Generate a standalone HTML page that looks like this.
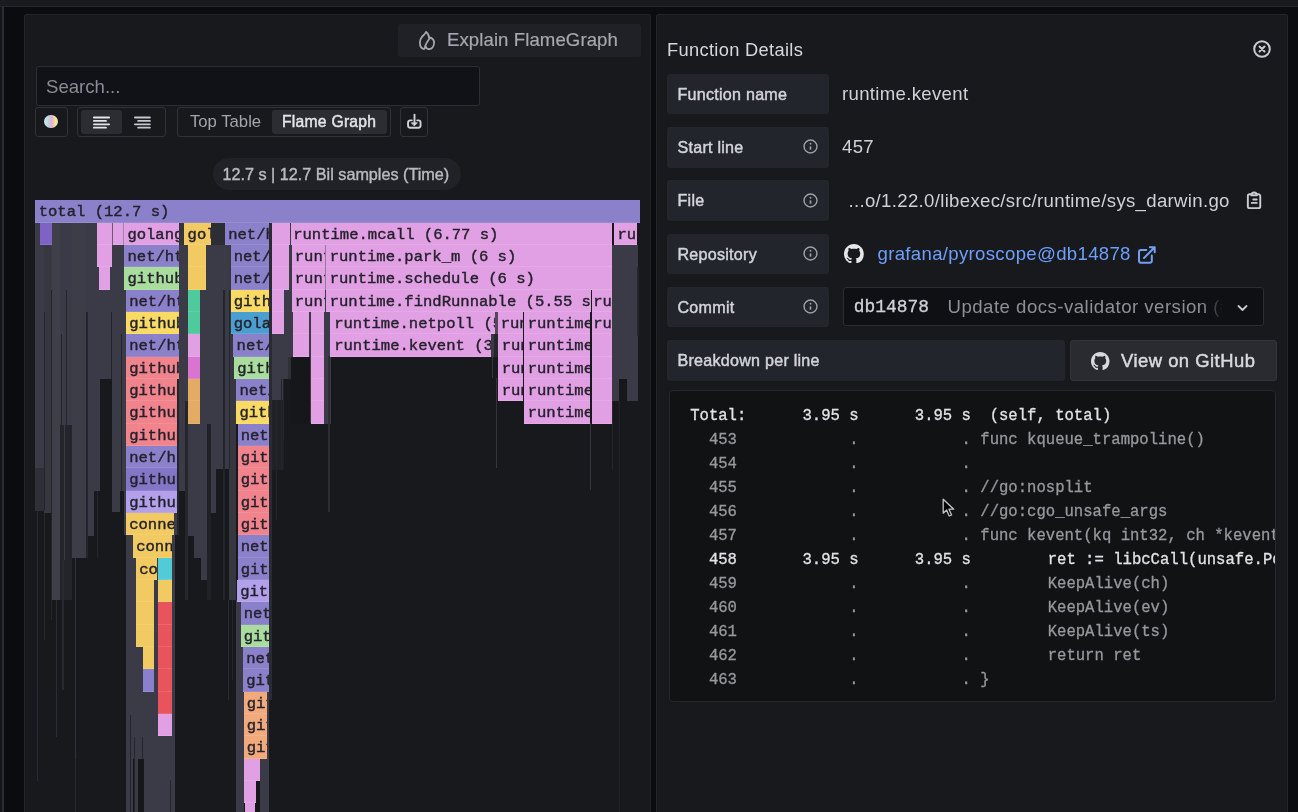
<!DOCTYPE html>
<html><head><meta charset="utf-8"><title>Flame Graph</title>
<style>
*{box-sizing:border-box;margin:0;padding:0}
html,body{width:1298px;height:812px;overflow:hidden;background:#0b0c0f}
body{position:relative;font-family:"Liberation Sans",sans-serif;color:#d0d1d8}
.abs{position:absolute}
.r{position:absolute}
.b{position:absolute;height:22.33px;overflow:hidden;white-space:pre;font-family:"Liberation Mono",monospace;font-size:15.55px;line-height:24px;color:#24222c;-webkit-text-stroke:.4px #24222c;box-shadow:inset 0 -1px 0 rgba(255,255,255,.10)}
.panel{position:absolute;background:#17191d;border:1px solid #222428;border-radius:2px}
.lbl{position:absolute;left:667px;width:162px;height:40.5px;background:#22252b;border-radius:3px;font-size:16.1px;-webkit-text-stroke:.45px #d3d4db;letter-spacing:.25px;line-height:40.5px;padding-left:10.5px;color:#d3d4db;white-space:pre}
.val{position:absolute;font-size:18.6px;line-height:40px;color:#d0d1d8;white-space:pre;letter-spacing:.32px}
.info{position:absolute;left:803px;width:15px;height:15px}
.mono{font-family:"Liberation Mono",monospace}
.code{position:absolute;left:668.5px;top:390px;width:607px;height:312px;background:#111214;border:1px solid #25272c;border-radius:4px;overflow:hidden}
.code pre{position:absolute;left:20.7px;top:12.6px;font-family:"Liberation Mono",monospace;font-size:15.6px;line-height:24px;color:#97989d;white-space:pre;-webkit-text-stroke:.3px #97989d}
.code pre b{font-weight:normal;color:#e2e2e8;-webkit-text-stroke:.3px #e2e2e8}
.code pre i{display:inline-block;width:67.4px}
</style></head><body><div id="root" style="position:absolute;left:0;top:0;width:1298px;height:812px;overflow:hidden;will-change:transform">
<!-- top strip / side strip -->
<div class="abs" style="left:0;top:0;width:1298px;height:6px;background:#1a1b1f"></div>
<div class="abs" style="left:0;top:5.5px;width:1298px;height:1.5px;background:#25272c"></div>
<div class="abs" style="left:0;top:7px;width:3px;height:805px;background:#15161a"></div>
<div class="abs" style="left:2.2px;top:7px;width:1.4px;height:805px;background:#2a2c33"></div>

<!-- left panel -->
<div class="panel" style="left:24px;top:14px;width:627px;height:820px"></div>
<!-- right panel -->
<div class="panel" style="left:656px;top:14px;width:631.8px;height:820px"></div>

<!-- Explain FlameGraph button -->
<div class="abs" style="left:397.5px;top:24px;width:243px;height:32.5px;background:#1f2126;border-radius:3px"></div>
<svg class="abs" style="left:418.7px;top:31.1px" width="16" height="19" viewBox="0 0 16 19" fill="none" stroke="#a6a7ae" stroke-width="1.8" stroke-linecap="round" stroke-linejoin="round"><path d="M7.100 .9C5.800 3.200 4.600 4.200 3.200 5.600C1.400 7.600 .9 9.600 .9 11.600C.9 15 2.600 17.800 5.200 18.100C5.900 18.100 5.900 16.500 6.300 14.800C7 12.800 8.600 10.200 10.300 7.800C10.200 5.500 9.200 2.800 7.100 .9ZM10.300 7.800C10.800 7 11.600 6.500 12.400 6.900C14.200 8 15.100 9.800 15.100 11.600C15.100 15.200 13 17.900 10.200 18.200C8.400 18.200 6.900 16.800 6.300 14.800"/></svg>
<div class="abs" style="left:447px;top:24px;font-size:18.6px;line-height:32.5px;color:#a6a7ae;white-space:pre;letter-spacing:.08px;-webkit-text-stroke:.2px #a6a7ae" id="explain">Explain FlameGraph</div>

<!-- Search -->
<div class="abs" style="left:35.5px;top:66px;width:444px;height:39.5px;background:#111217;border:1px solid #2b2d33;border-radius:3px"></div>
<div class="abs" style="left:46px;top:67px;font-size:18.6px;line-height:40px;color:#8a8b93;white-space:pre" id="search">Search...</div>

<!-- toolbar -->
<div class="abs" style="left:35px;top:107px;width:32.5px;height:29.5px;border:1px solid #303238;border-radius:3px"></div>
<div class="abs" style="left:44.4px;top:114.8px;width:13.4px;height:13.4px;border-radius:50%;background:linear-gradient(90deg,#dfe2e4 0%,#b4dcea 28%,#e8add0 55%,#f2e39c 80%,#e4edba 100%)"></div>

<div class="abs" style="left:77px;top:107px;width:89px;height:29.5px;border:1px solid #303238;border-radius:3px"></div>
<div class="abs" style="left:81px;top:110px;width:40.5px;height:23.5px;background:#2b2d33;border-radius:3px"></div>
<svg class="abs" style="left:92px;top:115.6px" width="19" height="15" viewBox="0 0 19 15" stroke="#e4e5ea" stroke-width="1.8" stroke-linecap="round"><path d="M1.900 1.500H17.100M1.900 4.900H14M1.900 8.300H17.100M1.900 11.700H14"/></svg>
<svg class="abs" style="left:133px;top:115.600px" width="19" height="15" viewBox="0 0 19 15" stroke="#c6c7ce" stroke-width="1.8" stroke-linecap="round"><path d="M1.900 1.500H16.900M5.100 4.900H16.900M1.900 8.300H16.900M5.100 11.700H16.900"/></svg>

<div class="abs" style="left:176.500px;top:107px;width:214px;height:29.5px;border:1px solid #303238;border-radius:3px"></div>
<div class="abs" style="left:190px;top:107px;font-size:16.7px;line-height:29.5px;color:#a3a4ac;white-space:pre" id="toptable">Top Table</div>
<div class="abs" style="left:271.5px;top:110px;width:115.5px;height:23.5px;background:#2b2d33;border-radius:3px"></div>
<div class="abs" style="left:282px;top:107px;font-size:15.7px;-webkit-text-stroke:.45px #e4e5ea;letter-spacing:.25px;line-height:29.5px;color:#e4e5ea;white-space:pre" id="flamegraph">Flame Graph</div>

<div class="abs" style="left:400px;top:107px;width:27.5px;height:29.5px;border:1px solid #303238;border-radius:3px"></div>
<svg class="abs" style="left:405px;top:112px" width="19" height="19" viewBox="0 0 19 19" fill="none" stroke="#d0d1d8" stroke-width="1.9" stroke-linecap="round" stroke-linejoin="round"><path d="M6.800 8.350H5.200C4 8.350 3.050 9.300 3.050 10.500V13.600C3.050 14.800 4 15.750 5.200 15.750H13.400C14.600 15.750 15.550 14.800 15.550 13.600V10.500C15.550 9.300 14.600 8.350 13.400 8.350H12.200M9.500 2.600V11"/><path d="M6.700 10.900H12.300L9.500 13.500Z" fill="#d0d1d8" stroke-width="1"/></svg>

<!-- pill -->
<div class="abs" style="left:213px;top:157.5px;width:248px;height:32.5px;background:#202227;border-radius:17px"></div>
<div class="abs" style="left:222.5px;top:157.500px;font-size:16.2px;line-height:32.5px;color:#b9bac1;white-space:pre;-webkit-text-stroke:.4px #b9bac1;letter-spacing:0px" id="pill">12.7 s | 12.7 Bil samples (Time)</div>

<!-- flame graph -->
<div class="r" style="left:35.00px;top:222.00px;width:9.00px;height:246.00px;background:#3a3b46"></div>
<div class="r" style="left:35.00px;top:468.00px;width:9.00px;height:43.00px;background:#2e2f37"></div>
<div class="r" style="left:44.00px;top:222.00px;width:7.00px;height:291.00px;background:#37383f"></div>
<div class="r" style="left:51.00px;top:222.00px;width:1.30px;height:68.00px;background:#3a3b46"></div>
<div class="r" style="left:52.00px;top:222.00px;width:8.00px;height:378.00px;background:#3e3f49"></div>
<div class="r" style="left:60.00px;top:222.00px;width:12.00px;height:203.00px;background:#3a3b46"></div>
<div class="r" style="left:60.00px;top:425.00px;width:12.00px;height:175.00px;background:#24252b"></div>
<div class="r" style="left:63.50px;top:425.00px;width:1.50px;height:135.00px;background:#383943"></div>
<div class="r" style="left:72.00px;top:222.00px;width:14.00px;height:336.00px;background:#3c3d47"></div>
<div class="r" style="left:85.60px;top:222.00px;width:2.90px;height:90.00px;background:#3a3b46"></div>
<div class="r" style="left:88.00px;top:222.00px;width:6.00px;height:314.00px;background:#3a3b46"></div>
<div class="r" style="left:94.00px;top:222.00px;width:6.00px;height:269.00px;background:#3a3b46"></div>
<div class="r" style="left:100.00px;top:222.00px;width:12.00px;height:157.00px;background:#3a3b46"></div>
<div class="r" style="left:112.00px;top:222.00px;width:8.00px;height:290.40px;background:#3a3b46"></div>
<div class="r" style="left:120.00px;top:222.00px;width:6.00px;height:269.00px;background:#3a3b46"></div>
<div class="r" style="left:51.00px;top:290.00px;width:1.30px;height:330.00px;background:#24252b"></div>
<div class="r" style="left:65.50px;top:290.00px;width:1.60px;height:135.00px;background:#24252b"></div>
<div class="r" style="left:85.60px;top:312.00px;width:2.20px;height:246.00px;background:#24252b"></div>
<div class="r" style="left:110.50px;top:312.00px;width:1.40px;height:67.00px;background:#24252b"></div>
<div class="r" style="left:60.50px;top:334.00px;width:1.60px;height:91.00px;background:#24252b"></div>
<div class="r" style="left:44.00px;top:312.00px;width:1.00px;height:199.00px;background:#24252b"></div>
<div class="r" style="left:121.00px;top:334.00px;width:1.00px;height:157.00px;background:#24252b"></div>
<div class="r" style="left:96.50px;top:491.00px;width:1.00px;height:67.00px;background:#24252b"></div>
<div class="r" style="left:36.50px;top:511.00px;width:1.50px;height:270.00px;background:#2a2b32"></div>
<div class="r" style="left:55.50px;top:600.00px;width:1.50px;height:137.00px;background:#2c2d34"></div>
<div class="r" style="left:62.00px;top:560.00px;width:1.50px;height:130.00px;background:#292a31"></div>
<div class="r" style="left:74.50px;top:558.00px;width:1.80px;height:201.00px;background:#2f3038"></div>
<div class="r" style="left:74.50px;top:759.00px;width:1.50px;height:53.00px;background:#25262c"></div>
<div class="r" style="left:44.00px;top:513.00px;width:1.20px;height:127.00px;background:#26272d"></div>
<div class="r" style="left:124.00px;top:222.00px;width:55.00px;height:313.00px;background:#3a3b46"></div>
<div class="r" style="left:126.00px;top:535.00px;width:49.00px;height:277.00px;background:#3a3b46"></div>
<div class="r" style="left:129.50px;top:715.00px;width:1.20px;height:97.00px;background:#24252b"></div>
<div class="r" style="left:133.50px;top:737.00px;width:1.20px;height:75.00px;background:#24252b"></div>
<div class="r" style="left:142.00px;top:737.00px;width:1.20px;height:23.00px;background:#24252b"></div>
<div class="r" style="left:138.00px;top:759.00px;width:6.00px;height:53.00px;background:#16171b"></div>
<div class="r" style="left:132.50px;top:759.00px;width:1.50px;height:53.00px;background:#16171b"></div>
<div class="r" style="left:170.00px;top:780.00px;width:1.20px;height:32.00px;background:#24252b"></div>
<div class="r" style="left:179.00px;top:222.00px;width:5.00px;height:23.00px;background:#33343d"></div>
<div class="r" style="left:177.00px;top:245.00px;width:2.40px;height:290.00px;background:#24252b"></div>
<div class="r" style="left:179.00px;top:245.00px;width:6.00px;height:246.00px;background:#3a3b46"></div>
<div class="r" style="left:289.00px;top:222.00px;width:2.60px;height:23.00px;background:#9f8ba6"></div>
<div class="r" style="left:185.30px;top:245.00px;width:2.70px;height:156.00px;background:#3a3b46"></div>
<div class="r" style="left:185.30px;top:401.00px;width:2.70px;height:199.00px;background:#25262c"></div>
<div class="r" style="left:188.00px;top:245.00px;width:6.00px;height:291.00px;background:#3a3b46"></div>
<div class="r" style="left:194.00px;top:245.00px;width:7.00px;height:313.00px;background:#3a3b46"></div>
<div class="r" style="left:201.00px;top:245.00px;width:6.00px;height:335.00px;background:#3a3b46"></div>
<div class="r" style="left:207.00px;top:245.00px;width:4.00px;height:179.00px;background:#3a3b46"></div>
<div class="r" style="left:207.00px;top:424.00px;width:4.00px;height:176.00px;background:#202126"></div>
<div class="r" style="left:211.00px;top:245.00px;width:5.00px;height:268.00px;background:#3a3b46"></div>
<div class="r" style="left:216.00px;top:245.00px;width:7.00px;height:224.00px;background:#3a3b46"></div>
<div class="r" style="left:222.80px;top:245.00px;width:2.60px;height:45.00px;background:#3a3b46"></div>
<div class="r" style="left:222.80px;top:290.00px;width:2.60px;height:310.00px;background:#24252b"></div>
<div class="r" style="left:225.00px;top:245.00px;width:4.00px;height:224.00px;background:#3a3b46"></div>
<div class="r" style="left:229.00px;top:245.00px;width:7.00px;height:355.00px;background:#36373f"></div>
<div class="r" style="left:211.00px;top:222.00px;width:14.00px;height:23.00px;background:#2c2d35"></div>
<div class="r" style="left:236.00px;top:600.00px;width:8.00px;height:212.00px;background:#3a3b46"></div>
<div class="r" style="left:256.00px;top:758.00px;width:13.00px;height:54.00px;background:#3a3b46"></div>
<div class="r" style="left:256.00px;top:781.00px;width:4.00px;height:31.00px;background:#16171b"></div>
<div class="r" style="left:266.50px;top:691.00px;width:2.30px;height:67.00px;background:#3a3b46"></div>
<div class="r" style="left:228.00px;top:600.00px;width:1.30px;height:100.00px;background:#2a2b32"></div>
<div class="r" style="left:232.00px;top:600.00px;width:1.00px;height:80.00px;background:#26272d"></div>
<div class="r" style="left:229.00px;top:290.00px;width:1.30px;height:179.00px;background:#24252b"></div>
<div class="r" style="left:269.00px;top:222.00px;width:3.00px;height:478.00px;background:#292a32"></div>
<div class="r" style="left:272.00px;top:222.00px;width:19.00px;height:135.00px;background:#3a3b46"></div>
<div class="r" style="left:272.00px;top:357.00px;width:12.00px;height:43.00px;background:#3a3b46"></div>
<div class="r" style="left:284.00px;top:357.00px;width:4.00px;height:22.00px;background:#3a3b46"></div>
<div class="r" style="left:288.00px;top:357.00px;width:3.00px;height:22.00px;background:#2f3038"></div>
<div class="r" style="left:272.00px;top:400.00px;width:12.00px;height:70.00px;background:#202126"></div>
<div class="r" style="left:281.30px;top:379.00px;width:1.00px;height:91.00px;background:#24252b"></div>
<div class="r" style="left:283.30px;top:379.00px;width:0.90px;height:61.00px;background:#24252b"></div>
<div class="r" style="left:276.00px;top:400.00px;width:1.00px;height:120.00px;background:#23242a"></div>
<div class="r" style="left:291.00px;top:245.00px;width:35.00px;height:178.00px;background:#3a3b46"></div>
<div class="r" style="left:291.00px;top:357.00px;width:19.00px;height:67.00px;background:#16171b"></div>
<div class="r" style="left:324.00px;top:311.00px;width:7.00px;height:113.00px;background:#3a3b46"></div>
<div class="r" style="left:328.00px;top:356.00px;width:1.50px;height:156.00px;background:#2c2d35"></div>
<div class="r" style="left:612.00px;top:245.00px;width:26.00px;height:156.00px;background:#3a3b46"></div>
<div class="r" style="left:637.00px;top:267.00px;width:1.50px;height:69.00px;background:#24252b"></div>
<div class="r" style="left:619.00px;top:379.00px;width:8.00px;height:22.00px;background:#16171b"></div>
<div class="r" style="left:618.60px;top:401.00px;width:1.40px;height:411.00px;background:#202127"></div>
<div class="r" style="left:612.00px;top:401.00px;width:1.00px;height:69.00px;background:#24252b"></div>
<div class="r" style="left:491.00px;top:334.30px;width:3.00px;height:22.30px;background:#393a44"></div>
<div class="r" style="left:494.00px;top:334.30px;width:4.00px;height:22.30px;background:#26272d"></div>
<div class="r" style="left:495.00px;top:311.90px;width:2.80px;height:22.40px;background:#54475a"></div>
<div class="r" style="left:491.50px;top:356.60px;width:1.50px;height:21.40px;background:#33343d"></div>
<div class="r" style="left:495.50px;top:378.00px;width:1.50px;height:90.00px;background:#33343d"></div>
<div class="r" style="left:589.50px;top:423.00px;width:1.50px;height:67.00px;background:#33343d"></div>
<div class="r" style="left:325.00px;top:245.00px;width:1.20px;height:45.00px;background:#8f7d96"></div>
<div class="r" style="left:112.00px;top:222.00px;width:1.20px;height:23.00px;background:#6a5d72"></div>
<div class="r" style="left:122.80px;top:222.00px;width:1.60px;height:23.00px;background:#9f8ba6"></div>
<div class="b" style="left:35.00px;top:200.30px;width:604.50px;background:#8b80ca;padding-left:3.7px">total (12.7 s)</div>
<div class="b" style="left:40.00px;top:222.63px;width:12.00px;background:#7e62c6;padding-left:3.2px"></div>
<div class="b" style="left:96.50px;top:222.63px;width:15.50px;background:#e2a0e4;padding-left:3.2px"></div>
<div class="b" style="left:113.00px;top:222.63px;width:9.90px;background:#e2a0e4;padding-left:3.2px"></div>
<div class="b" style="left:124.20px;top:222.63px;width:54.80px;background:#e2a0e4;padding-left:3.2px">golang.org/x</div>
<div class="b" style="left:184.40px;top:222.63px;width:26.60px;background:#f2ca62;padding-left:3.2px">golang</div>
<div class="b" style="left:225.00px;top:222.63px;width:43.80px;background:#8b80ca;padding-left:3.2px">net/ht</div>
<div class="b" style="left:272.40px;top:222.63px;width:17.30px;background:#e2a0e4;padding-left:3.2px"></div>
<div class="b" style="left:290.50px;top:222.63px;width:321.25px;background:#e2a0e4;padding-left:2.7px">runtime.mcall (6.77 s)</div>
<div class="b" style="left:613.75px;top:222.63px;width:23.00px;background:#e2a0e4;padding-left:3.7px">ru</div>
<div class="b" style="left:96.50px;top:244.96px;width:15.50px;background:#e2a0e4;padding-left:3.2px"></div>
<div class="b" style="left:124.30px;top:244.96px;width:54.70px;background:#8b80ca;padding-left:3.2px">net/htt</div>
<div class="b" style="left:187.60px;top:244.96px;width:18.20px;background:#f2ca62;padding-left:3.2px"></div>
<div class="b" style="left:230.50px;top:244.96px;width:38.30px;background:#8b80ca;padding-left:3.2px">net/ht</div>
<div class="b" style="left:272.40px;top:244.96px;width:16.60px;background:#e2a0e4;padding-left:3.2px"></div>
<div class="b" style="left:291.60px;top:244.96px;width:33.60px;background:#e2a0e4;padding-left:3.2px">runtime</div>
<div class="b" style="left:326.00px;top:244.96px;width:285.75px;background:#e2a0e4;padding-left:3.7px">runtime.park_m (6 s)</div>
<div class="b" style="left:98.50px;top:267.29px;width:11.50px;background:#e2a0e4;padding-left:3.2px"></div>
<div class="b" style="left:124.30px;top:267.29px;width:54.70px;background:#a9dd9d;padding-left:3.2px">github.com</div>
<div class="b" style="left:187.60px;top:267.29px;width:18.20px;background:#f2ca62;padding-left:3.2px"></div>
<div class="b" style="left:230.50px;top:267.29px;width:38.30px;background:#8b80ca;padding-left:3.2px">net/ht</div>
<div class="b" style="left:272.40px;top:267.29px;width:16.60px;background:#e2a0e4;padding-left:3.2px"></div>
<div class="b" style="left:291.60px;top:267.29px;width:33.60px;background:#e2a0e4;padding-left:3.2px">runtime</div>
<div class="b" style="left:326.00px;top:267.29px;width:285.75px;background:#e2a0e4;padding-left:3.7px">runtime.schedule (6 s)</div>
<div class="b" style="left:126.00px;top:289.62px;width:53.00px;background:#8b80ca;padding-left:3.2px">net/htt</div>
<div class="b" style="left:187.60px;top:289.62px;width:12.80px;background:#4fca9c;padding-left:3.2px"></div>
<div class="b" style="left:230.50px;top:289.62px;width:38.30px;background:#f8da64;padding-left:3.2px">github</div>
<div class="b" style="left:272.40px;top:289.62px;width:11.80px;background:#e2a0e4;padding-left:3.2px"></div>
<div class="b" style="left:291.60px;top:289.62px;width:33.00px;background:#e2a0e4;padding-left:3.2px">runtime</div>
<div class="b" style="left:326.00px;top:289.62px;width:264.50px;background:#e2a0e4;padding-left:3.7px">runtime.findRunnable (5.55 s)</div>
<div class="b" style="left:591.60px;top:289.62px;width:20.15px;background:#e2a0e4;padding-left:1.7px">run</div>
<div class="b" style="left:126.00px;top:311.95px;width:53.00px;background:#f8da64;padding-left:3.2px">github.com</div>
<div class="b" style="left:187.60px;top:311.95px;width:12.80px;background:#4fca9c;padding-left:3.2px"></div>
<div class="b" style="left:230.50px;top:311.95px;width:38.30px;background:#4b9fd0;padding-left:3.2px">golang</div>
<div class="b" style="left:272.40px;top:311.95px;width:11.80px;background:#e2a0e4;padding-left:3.2px"></div>
<div class="b" style="left:292.50px;top:311.95px;width:16.70px;background:#e2a0e4;padding-left:3.2px"></div>
<div class="b" style="left:310.60px;top:311.95px;width:13.20px;background:#e2a0e4;padding-left:3.2px"></div>
<div class="b" style="left:330.00px;top:311.95px;width:165.00px;background:#e2a0e4;padding-left:4.2px">runtime.netpoll (5 s)</div>
<div class="b" style="left:498.00px;top:311.95px;width:25.00px;background:#e2a0e4;padding-left:2.7px">runtime</div>
<div class="b" style="left:524.00px;top:311.95px;width:66.40px;background:#e2a0e4;padding-left:3.7px">runtime.</div>
<div class="b" style="left:591.60px;top:311.95px;width:20.15px;background:#e2a0e4;padding-left:1.7px">run</div>
<div class="b" style="left:126.00px;top:334.28px;width:53.00px;background:#8b80ca;padding-left:3.2px">net/htt</div>
<div class="b" style="left:187.60px;top:334.28px;width:12.80px;background:#e2a0e4;padding-left:3.2px"></div>
<div class="b" style="left:233.40px;top:334.28px;width:35.40px;background:#8b80ca;padding-left:3.2px">net/ht</div>
<div class="b" style="left:292.50px;top:334.28px;width:16.70px;background:#e2a0e4;padding-left:3.2px"></div>
<div class="b" style="left:310.60px;top:334.28px;width:13.20px;background:#e2a0e4;padding-left:3.2px"></div>
<div class="b" style="left:330.00px;top:334.28px;width:161.00px;background:#e2a0e4;padding-left:4.2px">runtime.kevent (3.95 s)</div>
<div class="b" style="left:498.00px;top:334.28px;width:25.00px;background:#e2a0e4;padding-left:3.7px">runtime</div>
<div class="b" style="left:524.00px;top:334.28px;width:66.40px;background:#e2a0e4;padding-left:3.7px">runtime.</div>
<div class="b" style="left:591.60px;top:334.28px;width:20.15px;background:#e2a0e4;padding-left:3.2px"></div>
<div class="b" style="left:126.00px;top:356.61px;width:53.00px;background:#f0838c;padding-left:3.2px">github.com</div>
<div class="b" style="left:187.60px;top:356.61px;width:12.80px;background:#d975d1;padding-left:3.2px"></div>
<div class="b" style="left:234.00px;top:356.61px;width:34.80px;background:#a9dd9d;padding-left:3.2px">github</div>
<div class="b" style="left:310.60px;top:356.61px;width:13.20px;background:#e2a0e4;padding-left:3.2px"></div>
<div class="b" style="left:498.00px;top:356.61px;width:25.00px;background:#e2a0e4;padding-left:3.7px">runtime</div>
<div class="b" style="left:524.00px;top:356.61px;width:66.40px;background:#e2a0e4;padding-left:3.7px">runtime.</div>
<div class="b" style="left:591.60px;top:356.61px;width:20.15px;background:#e2a0e4;padding-left:3.2px"></div>
<div class="b" style="left:126.00px;top:378.94px;width:51.20px;background:#f0838c;padding-left:3.2px">github.com</div>
<div class="b" style="left:188.00px;top:378.94px;width:12.40px;background:#e4ab62;padding-left:3.2px"></div>
<div class="b" style="left:236.20px;top:378.94px;width:32.60px;background:#8b80ca;padding-left:3.2px">net/</div>
<div class="b" style="left:310.60px;top:378.94px;width:13.20px;background:#e2a0e4;padding-left:3.2px"></div>
<div class="b" style="left:498.00px;top:378.94px;width:25.00px;background:#e2a0e4;padding-left:3.7px">runtime</div>
<div class="b" style="left:524.00px;top:378.94px;width:66.40px;background:#e2a0e4;padding-left:3.7px">runtime.</div>
<div class="b" style="left:591.60px;top:378.94px;width:20.15px;background:#e2a0e4;padding-left:3.2px"></div>
<div class="b" style="left:126.00px;top:401.27px;width:51.20px;background:#f0838c;padding-left:3.2px">github.com</div>
<div class="b" style="left:188.00px;top:401.27px;width:12.40px;background:#e4ab62;padding-left:3.2px"></div>
<div class="b" style="left:236.20px;top:401.27px;width:32.60px;background:#f8da64;padding-left:3.2px">gith</div>
<div class="b" style="left:310.60px;top:401.27px;width:13.20px;background:#e2a0e4;padding-left:3.2px"></div>
<div class="b" style="left:524.00px;top:401.27px;width:66.40px;background:#e2a0e4;padding-left:3.7px">runtime.</div>
<div class="b" style="left:591.60px;top:401.27px;width:20.15px;background:#e2a0e4;padding-left:3.2px"></div>
<div class="b" style="left:126.00px;top:423.60px;width:51.20px;background:#f0838c;padding-left:3.2px">github.com</div>
<div class="b" style="left:237.50px;top:423.60px;width:31.30px;background:#8b80ca;padding-left:3.2px">net/</div>
<div class="b" style="left:126.00px;top:445.93px;width:51.20px;background:#8b80ca;padding-left:3.2px">net/ht</div>
<div class="b" style="left:237.50px;top:445.93px;width:31.30px;background:#f0838c;padding-left:3.2px">gith</div>
<div class="b" style="left:126.00px;top:468.26px;width:51.20px;background:#8376c6;padding-left:3.2px">github.com</div>
<div class="b" style="left:237.50px;top:468.26px;width:31.30px;background:#f0838c;padding-left:3.2px">gith</div>
<div class="b" style="left:126.00px;top:490.59px;width:51.20px;background:#b2a0ea;padding-left:3.2px">github.com</div>
<div class="b" style="left:237.50px;top:490.59px;width:31.30px;background:#f0838c;padding-left:3.2px">gith</div>
<div class="b" style="left:126.00px;top:512.92px;width:48.00px;background:#f2ca62;padding-left:3.2px">connectrpc</div>
<div class="b" style="left:237.50px;top:512.92px;width:31.30px;background:#f0838c;padding-left:3.2px">gith</div>
<div class="b" style="left:133.00px;top:535.25px;width:38.80px;background:#f2ca62;padding-left:3.2px">connectrpc</div>
<div class="b" style="left:237.50px;top:535.25px;width:31.30px;background:#8b80ca;padding-left:3.2px">net/</div>
<div class="b" style="left:135.50px;top:557.58px;width:21.50px;background:#f2ca62;padding-left:3.7px">connect</div>
<div class="b" style="left:158.00px;top:557.58px;width:13.50px;background:#52cbd9;padding-left:3.2px"></div>
<div class="b" style="left:237.50px;top:557.58px;width:31.30px;background:#8b80ca;padding-left:3.2px">gith</div>
<div class="b" style="left:135.50px;top:579.91px;width:18.80px;background:#f2ca62;padding-left:3.2px"></div>
<div class="b" style="left:157.50px;top:579.91px;width:14.00px;background:#f2ca62;padding-left:3.2px"></div>
<div class="b" style="left:237.00px;top:579.91px;width:31.80px;background:#b2a0ea;padding-left:3.2px">gith</div>
<div class="b" style="left:135.50px;top:602.24px;width:18.80px;background:#f2ca62;padding-left:3.2px"></div>
<div class="b" style="left:158.00px;top:602.24px;width:13.70px;background:#e9535e;padding-left:3.2px"></div>
<div class="b" style="left:240.50px;top:602.24px;width:28.30px;background:#8b80ca;padding-left:3.2px">net/</div>
<div class="b" style="left:135.50px;top:624.57px;width:18.80px;background:#f2ca62;padding-left:3.2px"></div>
<div class="b" style="left:158.00px;top:624.57px;width:13.70px;background:#e9535e;padding-left:3.2px"></div>
<div class="b" style="left:240.50px;top:624.57px;width:28.30px;background:#a9dd9d;padding-left:3.2px">gith</div>
<div class="b" style="left:143.00px;top:646.90px;width:10.70px;background:#f2ca62;padding-left:3.2px"></div>
<div class="b" style="left:158.00px;top:646.90px;width:13.70px;background:#e9535e;padding-left:3.2px"></div>
<div class="b" style="left:243.00px;top:646.90px;width:25.80px;background:#8b80ca;padding-left:3.2px">net/</div>
<div class="b" style="left:143.00px;top:669.23px;width:10.70px;background:#8b80d0;padding-left:3.2px"></div>
<div class="b" style="left:158.00px;top:669.23px;width:13.70px;background:#e9535e;padding-left:3.2px"></div>
<div class="b" style="left:243.00px;top:669.23px;width:25.80px;background:#8b80ca;padding-left:3.2px">gith</div>
<div class="b" style="left:158.00px;top:691.56px;width:13.70px;background:#e9535e;padding-left:3.2px"></div>
<div class="b" style="left:243.50px;top:691.56px;width:23.50px;background:#f2aa7c;padding-left:3.2px">gith</div>
<div class="b" style="left:158.00px;top:713.89px;width:13.70px;background:#e2a0e4;padding-left:3.2px"></div>
<div class="b" style="left:243.50px;top:713.89px;width:23.00px;background:#f2aa7c;padding-left:3.2px">gith</div>
<div class="b" style="left:243.50px;top:736.22px;width:23.00px;background:#f2aa7c;padding-left:3.2px">gith</div>
<div class="b" style="left:243.50px;top:758.55px;width:16.00px;background:#e2a0e4;padding-left:3.2px"></div>
<div class="b" style="left:243.50px;top:780.88px;width:12.50px;background:#e2a0e4;padding-left:3.2px"></div>
<div class="b" style="left:245.00px;top:803.21px;width:10.00px;background:#e2a0e4;padding-left:3.2px"></div>

<!-- Function details -->
<div class="abs" style="left:667px;top:34px;font-size:18.3px;line-height:32px;color:#d6d7de;white-space:pre;letter-spacing:.32px" id="fd">Function Details</div>
<svg class="abs" style="left:1251.600px;top:39.200px" width="20" height="20" viewBox="0 0 20 20" fill="none" stroke="#c9cad0" stroke-width="2" stroke-linecap="round"><circle cx="10" cy="10" r="7.800"/><path d="M7.500 7.500L12.500 12.500M12.500 7.500L7.500 12.500"/></svg>

<div class="lbl" style="top:73.500px">Function name</div>
<div class="lbl" style="top:127px">Start line</div>
<div class="lbl" style="top:180.300px">File</div>
<div class="lbl" style="top:233.500px">Repository</div>
<div class="lbl" style="top:286.800px">Commit</div>
<div class="lbl" style="top:340px;width:397.500px">Breakdown per line</div>

<svg class="info" style="top:139.200px" viewBox="0 0 16 16" fill="none" stroke="#9fa0a7" stroke-width="1.500"><circle cx="8" cy="8" r="6.900"/><path d="M8 7.900V11.400" stroke-width="1.800" stroke-linecap="butt"/><circle cx="8" cy="5.100" r="1" fill="#9fa0a7" stroke="none"/></svg>
<svg class="info" style="top:192.500px" viewBox="0 0 16 16" fill="none" stroke="#9fa0a7" stroke-width="1.500"><circle cx="8" cy="8" r="6.900"/><path d="M8 7.900V11.400" stroke-width="1.800" stroke-linecap="butt"/><circle cx="8" cy="5.100" r="1" fill="#9fa0a7" stroke="none"/></svg>
<svg class="info" style="top:245.800px" viewBox="0 0 16 16" fill="none" stroke="#9fa0a7" stroke-width="1.500"><circle cx="8" cy="8" r="6.900"/><path d="M8 7.900V11.400" stroke-width="1.800" stroke-linecap="butt"/><circle cx="8" cy="5.100" r="1" fill="#9fa0a7" stroke="none"/></svg>
<svg class="info" style="top:299.100px" viewBox="0 0 16 16" fill="none" stroke="#9fa0a7" stroke-width="1.500"><circle cx="8" cy="8" r="6.900"/><path d="M8 7.900V11.400" stroke-width="1.800" stroke-linecap="butt"/><circle cx="8" cy="5.100" r="1" fill="#9fa0a7" stroke="none"/></svg>

<div class="val" style="left:842px;top:73.500px" id="v1">runtime.kevent</div>
<div class="val" style="left:842px;top:127px" id="v2">457</div>
<div class="val" style="left:848.500px;top:180.800px" id="v3">...o/1.22.0/libexec/src/runtime/sys_darwin.go</div>
<svg class="abs" style="left:1245px;top:190px" width="18" height="21" viewBox="0 0 18 21" fill="none" stroke="#cbccd3" stroke-width="1.9" stroke-linejoin="round" stroke-linecap="round"><path d="M6.300 4.300H4.600C3.600 4.300 2.850 5.100 2.850 6V16.400C2.850 17.400 3.600 18.150 4.600 18.150H13.500C14.500 18.150 15.250 17.400 15.250 16.400V6C15.250 5.100 14.500 4.300 13.500 4.300H11.800"/><path d="M6.300 5.300C6.300 3.600 7.400 2.500 9.050 2.500C10.700 2.500 11.800 3.600 11.800 5.300Z"/><path d="M8.300 9.500H11.700M6.800 12.900H11.700"/></svg>

<!-- github icon + repo link -->
<svg class="abs" style="left:844px;top:243.600px" width="19.800" height="19.800" viewBox="0 0 16 16"><path fill="#e6e6ea" d="M8 0C3.580 0 0 3.580 0 8c0 3.540 2.290 6.530 5.470 7.590.4.070.55-.17.550-.38 0-.19-.01-.82-.01-1.490-2.010.37-2.530-.49-2.690-.94-.09-.23-.48-.94-.82-1.130-.28-.15-.68-.52-.01-.53.630-.01 1.080.58 1.230.82.720 1.210 1.870.87 2.330.66.070-.52.280-.87.510-1.070-1.780-.2-3.640-.89-3.640-3.950 0-.87.310-1.590.82-2.150-.08-.2-.36-1.020.08-2.120 0 0 .67-.21 2.200.82.640-.18 1.320-.27 2-.27s1.360.09 2 .27c1.530-1.040 2.200-.82 2.200-.82.440 1.100.16 1.920.08 2.120.51.56.82 1.270.82 2.150 0 3.070-1.870 3.750-3.650 3.950.29.250.54.730.54 1.480 0 1.070-.01 1.930-.01 2.200 0 .21.150.46.550.38A8.013 8.013 0 0016 8c0-4.420-3.580-8-8-8z"/></svg>
<div class="val" style="left:877.500px;top:233.500px;color:#6e9ffa" id="v4">grafana/pyroscope@db14878</div>
<svg class="abs" style="left:1137px;top:244.500px" width="20" height="20" viewBox="0 0 20 20" fill="none" stroke="#749ff5" stroke-width="2" stroke-linecap="round" stroke-linejoin="round"><path d="M14.800 10.500V15.800C14.800 16.900 13.900 17.800 12.800 17.800H4C2.900 17.800 2 16.900 2 15.800V7C2 5.900 2.900 5 4 5H9.300M12.800 2.300H17.700V7.200M17.700 2.300L7 13"/></svg>

<!-- commit select -->
<div class="abs" style="left:842.500px;top:286.800px;width:421px;height:39.700px;background:#0f1014;border:1px solid #2b2d33;border-radius:3px;overflow:hidden">
  <div class="abs mono" style="left:10.300px;top:0;font-size:17.900px;line-height:38px;color:#d0d1d8;-webkit-text-stroke:.3px #d0d1d8;white-space:pre" id="commit">db14878</div>
  <div class="abs" style="left:104px;top:0;font-size:18.600px;line-height:38px;color:#8e8f96;white-space:pre;width:274px;overflow:hidden;letter-spacing:.49px" id="cmsg">Update docs-validator version (#3</div>
  <div class="abs" style="left:358px;top:2px;width:22px;height:34px;background:linear-gradient(90deg,rgba(15,16,20,0),#0f1014)"></div>
</div>
<svg class="abs" style="left:1236px;top:301.500px" width="13" height="12" viewBox="0 0 13 12" fill="none" stroke="#c8c9d0" stroke-width="1.800" stroke-linecap="round" stroke-linejoin="round"><path d="M2.500 4L6.500 8L10.500 4"/></svg>

<!-- View on GitHub -->
<div class="abs" style="left:1070px;top:340px;width:207px;height:40.5px;background:#292b31;border:1px solid #33353c;border-radius:3px"></div>
<svg class="abs" style="left:1091px;top:351.500px" width="18.500" height="18.500" viewBox="0 0 16 16"><path fill="#d8d9de" d="M8 0C3.580 0 0 3.580 0 8c0 3.540 2.290 6.530 5.470 7.590.4.070.55-.17.550-.38 0-.19-.01-.82-.01-1.490-2.010.37-2.530-.49-2.690-.94-.09-.23-.48-.94-.82-1.130-.28-.15-.68-.52-.01-.53.630-.01 1.080.58 1.230.82.720 1.210 1.870.87 2.330.66.070-.52.280-.87.510-1.070-1.780-.2-3.640-.89-3.640-3.950 0-.87.310-1.590.82-2.150-.08-.2-.36-1.020.08-2.120 0 0 .67-.21 2.200.82.640-.18 1.320-.27 2-.27s1.360.09 2 .27c1.530-1.040 2.200-.82 2.200-.82.440 1.100.16 1.920.08 2.120.51.56.82 1.270.82 2.150 0 3.070-1.870 3.750-3.650 3.950.29.250.54.730.54 1.480 0 1.070-.01 1.930-.01 2.200 0 .21.150.46.550.38A8.013 8.013 0 0016 8c0-4.420-3.580-8-8-8z"/></svg>
<div class="abs" style="left:1121px;top:340.7px;font-size:18.4px;-webkit-text-stroke:.5px #d8d9de;letter-spacing:.5px;line-height:40.5px;color:#d8d9de;white-space:pre" id="vog">View on GitHub</div>

<!-- code -->
<div class="code"><pre><b>Total:      3.95 s      3.95 s  (self, total)</b>
  453            .           . func kqueue_trampoline()
  454            .           . 
  455            .           . //go:nosplit
  456            .           . //go:cgo_unsafe_args
  457            .           . func kevent(kq int32, ch *keventt, nch int32, ev *keventt
<b>  458       3.95 s      3.95 s <i></i>ret := libcCall(unsafe.Pointer(abi.FuncPCABI0(kevent_tr</b>
  459            .           . <i></i>KeepAlive(ch)
  460            .           . <i></i>KeepAlive(ev)
  461            .           . <i></i>KeepAlive(ts)
  462            .           . <i></i>return ret
  463            .           . }</pre></div>

<!-- mouse cursor -->
<svg class="abs" style="left:941.700px;top:498.300px" width="14" height="20" viewBox="0 0 14 20"><path d="M1.200 1.200V15.200L4.600 12L7.200 18L9.600 17L7 11.200H11.800Z" fill="#000" stroke="#c4c4c8" stroke-width="1.300" stroke-linejoin="round"/></svg>
</div></body></html>
